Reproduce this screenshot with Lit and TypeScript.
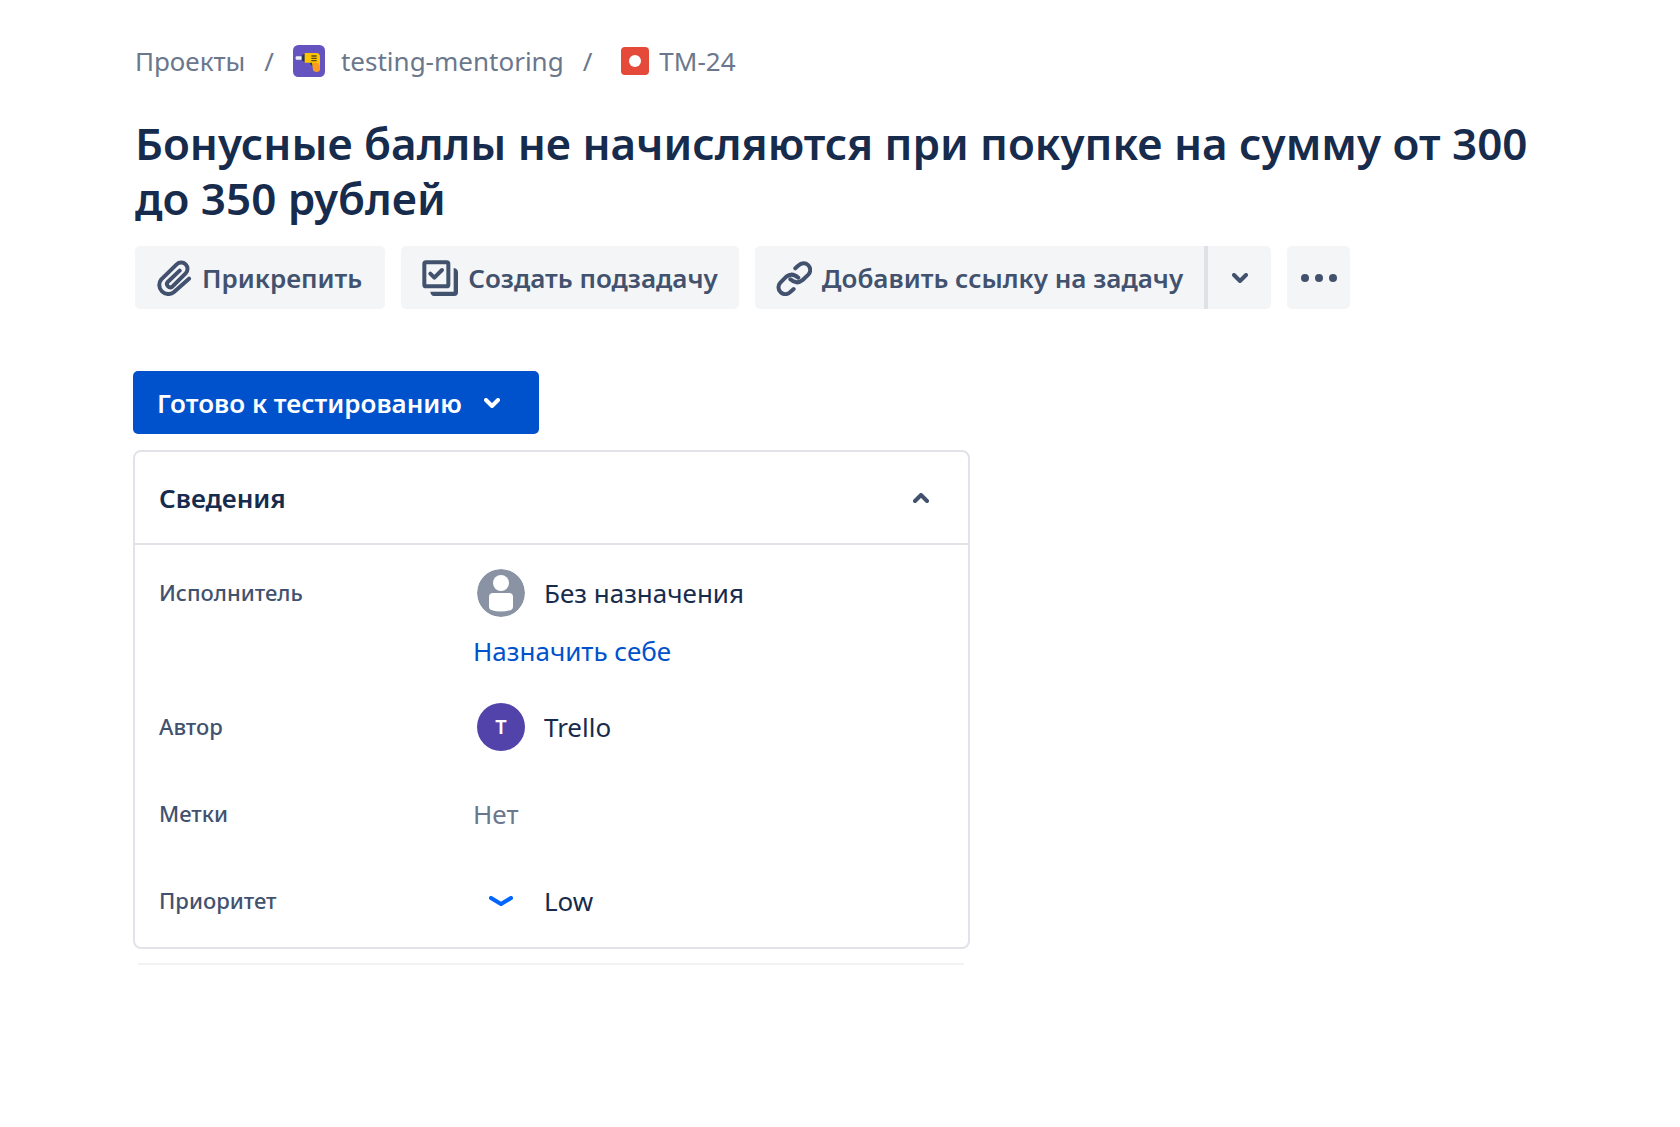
import { LitElement, html, css, svg } from "lit";
import { customElement, state } from "lit/decorators.js";

const chevronDown = html`
  <svg class="chevron" viewBox="0 0 16 10" aria-hidden="true"><path d="M2 2 L8 8 L14 2" /></svg>
`;
const chevronUp = html`
  <svg class="chevron" viewBox="0 0 16 10" aria-hidden="true"><path d="M2 8 L8 2 L14 8" /></svg>
`;

const attachIcon = html`
  <svg class="icon" viewBox="18 15 108 108" aria-hidden="true">
    <path
      class="line"
      d="M117 71 L72 111 A27 27 0 0 1 34 73 L80 28 A19 19 0 0 1 107 55 L67 95 A10 10 0 0 1 53 81 L89 47"
    />
  </svg>
`;

const subtaskIcon = html`
  <svg class="icon" viewBox="96 73 108 108" aria-hidden="true">
    <rect class="line" x="103" y="80" width="72" height="72" rx="5" />
    <path class="line" d="M121 114 L133 126 L156 103" />
    <path class="solid" d="M191 97 Q204 99 204 110 V170 Q204 181 193 181 H132 Q122 180 121 168 H191 Z" />
  </svg>
`;

const linkIcon = html`
  <svg class="icon" viewBox="18 18 108 108" aria-hidden="true">
    <path class="line" d="M76 43 L86 34 A20 20 0 0 1 115 62 L98 78 Q80 93 61 76" />
    <path class="line" d="M71 105 L61 114 A20 20 0 0 1 31 86 L49 68 Q66 54 85 71" />
  </svg>
`;

@customElement("app-root")
export class AppRoot extends LitElement {
  @state() private open = true;

  static styles = css`
    :host {
      --border: #e1e3e8;
      display: block;
      box-sizing: border-box;
      min-height: 100vh;
      padding: 43px 133px 48px;
      background: #fff;
      color: #172b4d;
      font-family: "Noto Sans", "Open Sans", sans-serif;
      font-size: 26px;
      line-height: 36px;
    }
    a {
      color: inherit;
      text-decoration: none;
    }
    button {
      margin: 0;
      border: 0;
      padding: 0;
      background: none;
      color: inherit;
      font: inherit;
      cursor: pointer;
    }
    svg {
      display: block;
      flex: none;
    }
    .top {
      padding-left: 2px;
    }
    .crumbs {
      display: flex;
      align-items: center;
      flex-wrap: wrap;
      gap: 19px;
      margin: 0;
      padding: 0;
      list-style: none;
      color: #6b778c;
    }
    .crumb {
      display: flex;
      align-items: center;
      gap: 16px;
    }
    .issue {
      gap: 10px;
      padding-left: 10px;
    }
    .project-icon {
      width: 32px;
      height: 32px;
    }
    .bug-icon {
      width: 28px;
      height: 28px;
    }
    h1 {
      margin: 37px 0 20px;
      font-size: 44px;
      font-weight: 600;
      line-height: 55px;
    }
    .actions {
      display: flex;
      flex-wrap: wrap;
      gap: 16px;
      color: #42526e;
      font-weight: 600;
    }
    .action {
      display: flex;
      align-items: center;
      justify-content: center;
      gap: 10px;
      box-sizing: border-box;
      min-width: 63px;
      height: 63px;
      padding: 0 21px;
      border-radius: 5px;
      background: #f4f5f7;
    }
    .attach {
      padding-right: 23px;
    }
    .split {
      display: flex;
    }
    .split .action:first-child {
      border-radius: 5px 0 0 5px;
    }
    .split .toggle {
      min-width: 67px;
      padding: 0;
      border-left: 4px solid #dfe1e6;
      border-radius: 0 5px 5px 0;
    }
    .icon {
      width: 36px;
      height: 36px;
    }
    .line {
      fill: none;
      stroke: currentColor;
      stroke-width: 12;
      stroke-linecap: round;
      stroke-linejoin: round;
    }
    .solid {
      fill: currentColor;
    }
    .dots {
      width: 36px;
      height: 8px;
      fill: currentColor;
    }
    .more {
      padding: 0;
    }
    .chevron {
      width: 16px;
      height: 10px;
      fill: none;
      stroke: currentColor;
      stroke-width: 4;
      stroke-linecap: round;
      stroke-linejoin: round;
    }
    .status {
      display: flex;
      align-items: center;
      gap: 22px;
      height: 63px;
      margin: 62px 0 16px;
      padding: 0 39px 0 24px;
      border-radius: 5px;
      background: #0052cc;
      color: #fff;
      font-weight: 600;
    }
    .card {
      box-sizing: border-box;
      max-width: 837px;
      border: 2px solid var(--border);
      border-radius: 8px;
    }
    h2 {
      margin: 0;
      font-size: 26px;
      font-weight: 600;
      line-height: 36px;
    }
    .card-head {
      display: flex;
      align-items: center;
      justify-content: space-between;
      width: 100%;
      padding: 28px 39px 27px 24px;
    }
    .card-head .chevron {
      color: #42526e;
    }
    .fields {
      display: grid;
      gap: 39px;
      margin: 0;
      padding: 24px 24px 22px;
      border-top: 2px solid var(--border);
    }
    .fields[hidden] {
      display: none;
    }
    .field {
      display: grid;
      grid-template-columns: 314px 1fr;
    }
    dt {
      color: #42526e;
      font-size: 22px;
      font-weight: 500;
      line-height: 46px;
    }
    dd {
      margin: 0;
    }
    .value {
      display: flex;
      align-items: center;
      gap: 19px;
      height: 48px;
    }
    .person {
      padding-left: 4px;
    }
    .avatar {
      display: flex;
      flex: none;
      align-items: center;
      justify-content: center;
      width: 48px;
      height: 48px;
      border-radius: 50%;
    }
    .initial {
      background: #5243aa;
      color: #fff;
      font-size: 20px;
      font-weight: 600;
      line-height: 24px;
    }
    .low {
      width: 24px;
      height: 10px;
      fill: none;
      stroke: #0065ff;
      stroke-width: 4;
      stroke-linecap: round;
      stroke-linejoin: round;
    }
    .self {
      display: block;
      margin-top: 21px;
      color: #0052cc;
      line-height: 26px;
    }
    .none {
      color: #6b778c;
    }
    .next {
      box-sizing: border-box;
      max-width: 826px;
      margin: 14px 5px 0;
      border: 0;
      border-top: 2px solid #f1f2f4;
    }
  `;

  private person = svg`
    <circle cx="24" cy="24" r="24" fill="#8993a4" />
    <circle cx="24" cy="14" r="8" fill="#fff" />
    <path d="M12 28 Q12 24 16 24 H32 Q36 24 36 28 V38 Q36 40 34 41 Q24 44 14 41 Q12 40 12 38 Z" fill="#fff" />
  `;

  render() {
    return html`
      <header class="top">
        <nav>
          <ol class="crumbs">
            <li class="crumb"><a href="#">Проекты</a></li>
            <li>/</li>
            <li class="crumb">
              <svg class="project-icon" viewBox="0 0 96 96" aria-hidden="true">
                <rect width="96" height="96" rx="16" fill="#6554c0" />
                <rect x="8" y="34" width="20" height="10" rx="3" fill="#eef0f8" />
                <path d="M26 32 L36 25 V52 L26 46 Z" fill="#253858" />
                <path d="M50 52 H62 V64 Q52 62 50 52 Z" fill="#253858" />
                <path d="M35 24 H70 Q81 24 81 36 V72 Q80 80 71 80 Q61 80 60 72 L57 53 H35 Z" fill="#ffc400" />
                <path d="M60 53 H74 L81 62 V72 Q80 80 71 80 Q61 80 60 72 Z" fill="#ff991f" />
                <path d="M55 33 H71 M55 40 H71 M55 47 H71" stroke="#5e4c1e" stroke-width="4" />
              </svg>
              <a href="#">testing-mentoring</a>
            </li>
            <li>/</li>
            <li class="crumb issue">
              <svg class="bug-icon" viewBox="0 0 28 28" aria-hidden="true">
                <rect width="28" height="28" rx="4" fill="#e5493a" />
                <circle cx="14" cy="14" r="6" fill="#fff" />
              </svg>
              <a href="#">TM-24</a>
            </li>
          </ol>
        </nav>
        <h1>Бонусные баллы не начисляются при покупке на сумму от 300 до 350 рублей</h1>
        <div class="actions">
          <button class="action attach">${attachIcon}Прикрепить</button>
          <button class="action">${subtaskIcon}Создать подзадачу</button>
          <div class="split">
            <button class="action">${linkIcon}Добавить ссылку на задачу</button>
            <button class="action toggle" aria-label="Другие ссылки">${chevronDown}</button>
          </div>
          <button class="action more" aria-label="Другие действия">
            <svg class="dots" viewBox="0 0 36 8" aria-hidden="true">
              <circle cx="4" cy="4" r="4" /><circle cx="18" cy="4" r="4" /><circle cx="32" cy="4" r="4" />
            </svg>
          </button>
        </div>
      </header>

      <button class="status">Готово к тестированию ${chevronDown}</button>

      <section class="card">
        <h2>
          <button class="card-head" aria-expanded=${this.open} @click=${() => (this.open = !this.open)}>
            Сведения ${this.open ? chevronUp : chevronDown}
          </button>
        </h2>
        <dl class="fields" ?hidden=${!this.open}>
          <div class="field">
            <dt>Исполнитель</dt>
            <dd>
              <div class="value person">
                <svg class="avatar" viewBox="0 0 48 48" aria-hidden="true">${this.person}</svg>
                Без назначения
              </div>
              <a class="self" href="#">Назначить себе</a>
            </dd>
          </div>
          <div class="field">
            <dt>Автор</dt>
            <dd class="value person"><span class="avatar initial">T</span>Trello</dd>
          </div>
          <div class="field">
            <dt>Метки</dt>
            <dd class="value none">Нет</dd>
          </div>
          <div class="field">
            <dt>Приоритет</dt>
            <dd class="value person">
              <span class="avatar">
                <svg class="low" viewBox="0 0 24 10" aria-hidden="true"><path d="M2 2 L12 8 L22 2" /></svg>
              </span>
              Low
            </dd>
          </div>
        </dl>
      </section>
      <hr class="next" />
    `;
  }
}
